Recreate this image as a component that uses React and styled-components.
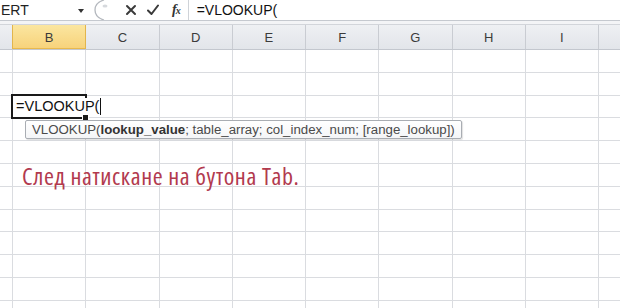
import React from "react";
import styled, { createGlobalStyle } from "styled-components";

const GlobalStyle = createGlobalStyle`
  html, body {
    margin: 0;
    padding: 0;
    background: #ffffff;
    overflow: hidden;
  }
`;

const COLS = ["", "B", "C", "D", "E", "F", "G", "H", "I", ""];
const COL_TEMPLATE = "13px repeat(9, 73.25px)";
const ROW_COUNT = 12;

const Screen = styled.div`
  width: 620px;
  height: 308px;
  overflow: hidden;
  position: relative;
  display: flex;
  flex-direction: column;
  font-family: "Liberation Sans", Arial, sans-serif;
  background: #fff;
`;

const FormulaBar = styled.div`
  height: 20px;
  display: flex;
  align-items: center;
  background: #fff;
  border-bottom: 1px solid #c5c9cf;
  flex-shrink: 0;
`;

const NameBox = styled.div`
  width: 88px;
  height: 100%;
  display: flex;
  align-items: center;
  justify-content: space-between;
  padding: 0 4px 0 1px;
  box-sizing: border-box;
  font-size: 14px;
  color: #222;
`;

const DropArrow = styled.span`
  width: 0;
  height: 0;
  border-left: 3px solid transparent;
  border-right: 3px solid transparent;
  border-top: 4px solid #333;
  margin-top: 1px;
`;

const Grip = styled.svg`
  width: 18px;
  height: 20px;
  margin-left: 4px;
  flex-shrink: 0;
`;

const IconGroup = styled.div`
  display: flex;
  align-items: center;
  height: 100%;
  margin-left: 15px;
  gap: 10px;
`;

const ToolIcon = styled.svg`
  width: ${(p) => p.w || 12}px;
  height: 12px;
  flex-shrink: 0;
`;

const Fx = styled.span`
  font-family: "Liberation Serif", "Times New Roman", serif;
  font-style: italic;
  font-weight: bold;
  font-size: 14px;
  color: #333;
  margin-left: 3px;
  letter-spacing: -1px;
  line-height: 1;
`;

const FxSub = styled.span`
  font-size: 10px;
`;

const Divider = styled.div`
  width: 1px;
  height: 100%;
  background: #cfd3d8;
  margin-left: 8px;
`;

const FormulaInput = styled.div`
  padding-left: 8px;
  font-size: 14px;
  color: #111;
`;

const Band = styled.div`
  height: 3px;
  background: #f3f4f6;
  border-bottom: 1px solid #d2d5da;
  flex-shrink: 0;
`;

const HeaderRow = styled.div`
  display: grid;
  grid-template-columns: ${COL_TEMPLATE};
  height: 24px;
  flex-shrink: 0;
  border-bottom: 1px solid #c3c7ce;
  background: linear-gradient(#eef0f3, #e2e5ea);
`;

const HeaderCell = styled.div`
  display: flex;
  align-items: center;
  justify-content: center;
  font-size: 13px;
  color: #3b3b3b;
  border-right: 1px solid ${(p) => (p.active ? "#e2b54c" : "#c9ccd2")};
  background: ${(p) =>
    p.active ? "linear-gradient(#fbe6a0, #f7d27a)" : "transparent"};
  box-shadow: ${(p) => (p.active ? "inset 0 -1px 0 #e9b94c" : "none")};
  ${(p) => p.active && "border-left: 1px solid #e2b54c; margin-left: -1px;"}
`;

const Body = styled.div`
  flex: 1;
  display: flex;
  flex-direction: column;
`;

const Row = styled.div`
  display: grid;
  grid-template-columns: ${COL_TEMPLATE};
  height: 22.8px;
  flex-shrink: 0;
`;

const Cell = styled.div`
  position: relative;
  box-sizing: border-box;
  border-right: 1px solid #dadce0;
  border-bottom: 1px solid #dadce0;
  overflow: visible;
`;

const ActiveCell = styled(Cell)`
  z-index: 2;
  &::after {
    content: "";
    position: absolute;
    left: -2px;
    top: -2px;
    right: -2px;
    bottom: -2px;
    border: 2px solid #1a1a1a;
    pointer-events: none;
  }
`;

const FillHandle = styled.span`
  position: absolute;
  right: -4px;
  bottom: -4px;
  width: 5px;
  height: 5px;
  background: #1a1a1a;
  border: 1px solid #fff;
  z-index: 3;
`;

const CellText = styled.span`
  position: absolute;
  left: 3px;
  top: 2px;
  white-space: nowrap;
  font-size: 14.5px;
  color: #111;
  display: flex;
  align-items: center;
  z-index: 4;
  background: #fff;
  padding-right: 1px;
`;

const Caret = styled.span`
  display: inline-block;
  width: 1px;
  height: 17px;
  background: #111;
  margin-left: 1px;
`;

const Tooltip = styled.div`
  position: absolute;
  left: 25px;
  top: 120px;
  height: 19px;
  padding: 0 6px 0 6px;
  display: flex;
  align-items: center;
  box-sizing: border-box;
  border: 1px solid #a9adb3;
  border-radius: 2px;
  background: linear-gradient(#ffffff, #f4f5f7);
  box-shadow: 1px 1px 1px rgba(0, 0, 0, 0.12);
  font-size: 13.25px;
  color: #4a4a4a;
  white-space: nowrap;
  z-index: 5;
`;

const Arg = styled.b`
  color: #333;
`;

const Caption = styled.div`
  position: absolute;
  left: 22px;
  top: 159px;
  font-family: "Liberation Sans Narrow", "Open Sans", sans-serif;
  font-stretch: condensed;
  font-size: 24px;
  letter-spacing: 0.6px;
  color: #b23a4e;
  white-space: nowrap;
  z-index: 5;
`;

export default function App() {
  const rows = Array.from({ length: ROW_COUNT }, (_, i) => i);
  return (
    <>
      <GlobalStyle />
      <Screen>
        <FormulaBar>
          <NameBox>
            <span>ERT</span>
            <DropArrow />
          </NameBox>
          <Grip viewBox="0 0 18 20">
            <path
              d="M12 0 C5 2 3 6 3 10 C3 14 5 18 12 20"
              fill="none"
              stroke="#b4b8be"
              strokeWidth="1.3"
            />
            <ellipse cx="13" cy="6" rx="2.5" ry="1.6" fill="#d6d9dd" />
          </Grip>
          <IconGroup>
            <ToolIcon viewBox="0 0 12 12">
              <path
                d="M2 2 L10 10 M10 2 L2 10"
                stroke="#3a3a3a"
                strokeWidth="2"
                strokeLinecap="round"
              />
            </ToolIcon>
            <ToolIcon viewBox="0 0 12 12">
              <path
                d="M1 6.5 L4.5 10 L11 1.5"
                fill="none"
                stroke="#3a3a3a"
                strokeWidth="2"
                strokeLinecap="round"
                strokeLinejoin="round"
              />
            </ToolIcon>
            <Fx>
              f<FxSub>x</FxSub>
            </Fx>
          </IconGroup>
          <Divider />
          <FormulaInput>=VLOOKUP(</FormulaInput>
        </FormulaBar>
        <Band />
        <HeaderRow>
          {COLS.map((c, i) => (
            <HeaderCell key={i} active={c === "B"}>
              {c}
            </HeaderCell>
          ))}
        </HeaderRow>
        <Body>
          {rows.map((r) => (
            <Row key={r}>
              {COLS.map((c, i) =>
                r === 2 && c === "B" ? (
                  <ActiveCell key={i}>
                    <CellText>
                      =VLOOKUP(
                      <Caret />
                    </CellText>
                    <FillHandle />
                  </ActiveCell>
                ) : (
                  <Cell key={i} />
                )
              )}
            </Row>
          ))}
        </Body>
        <Tooltip>
          VLOOKUP(<Arg>lookup_value</Arg>; table_array; col_index_num;
          [range_lookup])
        </Tooltip>
        <Caption>След натискане на бутона Tab.</Caption>
      </Screen>
    </>
  );
}
